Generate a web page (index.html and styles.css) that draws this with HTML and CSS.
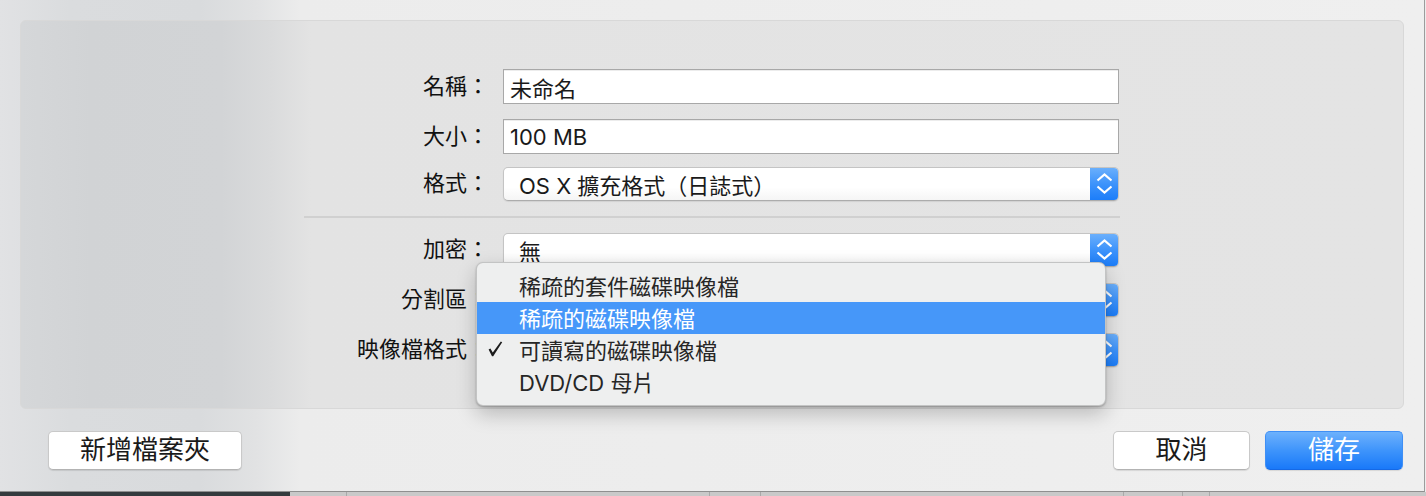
FILE: index.html
```html
<!DOCTYPE html>
<html lang="zh-Hant">
<head>
<meta charset="utf-8">
<title>新增映像檔</title>
<link rel="stylesheet" href="styles.css">
</head>
<body>
<div class="screen">
  <div class="sheet">
    <div class="panel">
      <div class="form">
        <div class="row r1">
          <div class="label">名稱：</div>
          <div class="field text">未命名</div>
        </div>
        <div class="row r2">
          <div class="label">大小：</div>
          <div class="field text">100 MB</div>
        </div>
        <div class="row r3">
          <div class="label">格式：</div>
          <div class="field popup"><span class="ptext">OS X 擴充格式（日誌式）</span><span class="stepper"><svg width="29" height="34" viewBox="0 0 29 34"><path d="M7.5 13.5 L14.5 7.5 L21.5 13.5 M7.5 19.5 L14.5 25.5 L21.5 19.5" fill="none" stroke="#fff" stroke-width="2.2"/></svg></span></div>
        </div>
        <div class="divider"></div>
        <div class="row r4">
          <div class="label">加密：</div>
          <div class="field popup"><span class="ptext">無</span><span class="stepper"><svg width="29" height="34" viewBox="0 0 29 34"><path d="M7.5 13.5 L14.5 7.5 L21.5 13.5 M7.5 19.5 L14.5 25.5 L21.5 19.5" fill="none" stroke="#fff" stroke-width="2.2"/></svg></span></div>
        </div>
        <div class="row r5">
          <div class="label">分割區：</div>
          <div class="field popup"><span class="ptext"></span><span class="stepper"><svg width="29" height="34" viewBox="0 0 29 34"><path d="M7.5 13.5 L14.5 7.5 L21.5 13.5 M7.5 19.5 L14.5 25.5 L21.5 19.5" fill="none" stroke="#fff" stroke-width="2.2"/></svg></span></div>
        </div>
        <div class="row r6">
          <div class="label">映像檔格式：</div>
          <div class="field popup"><span class="ptext"></span><span class="stepper"><svg width="29" height="34" viewBox="0 0 29 34"><path d="M7.5 13.5 L14.5 7.5 L21.5 13.5 M7.5 19.5 L14.5 25.5 L21.5 19.5" fill="none" stroke="#fff" stroke-width="2.2"/></svg></span></div>
        </div>
      </div>
    </div>
    <div class="actions">
      <button class="btn btn-folder">新增檔案夾</button>
      <div class="right-group">
        <button class="btn btn-cancel">取消</button>
        <button class="btn btn-primary">儲存</button>
      </div>
    </div>
    <div class="menu">
      <div class="item">稀疏的套件磁碟映像檔</div>
      <div class="item selected">稀疏的磁碟映像檔</div>
      <div class="item checked"><svg class="check" width="15" height="16" viewBox="0 0 15 16"><path d="M0.6 8.6 L2.4 7.6 L4.8 11.4 L12.8 0.6 L14.2 1.3 L5.2 15.2 L4 15.2 Z" fill="#1c1c1c"/></svg>可讀寫的磁碟映像檔</div>
      <div class="item">DVD/CD 母片</div>
    </div>
  </div>
  <div class="dock">
    <div class="seg dark"></div>
    <div class="seg s1"></div>
    <div class="seg s2"></div>
    <div class="seg s3"></div>
    <div class="seg s4"></div>
    <div class="seg s5"></div>
    <div class="seg s6"></div>
    <div class="seg s7"></div>
  </div>
</div>
</body>
</html>
```

FILE: styles.css
```css
* { box-sizing: border-box; }
html, body {
  margin: 0;
  padding: 0;
}
body {
  background: #ededed;
  font-family: "Inter", "Noto Sans CJK TC", "Noto Sans CJK SC", sans-serif;
  font-size: 22px;
  color: #111;
  width: 1426px;
  height: 496px;
  overflow: hidden;
}
.screen {
  width: 1426px;
  height: 496px;
  display: flex;
  flex-direction: column;
}
.sheet {
  position: relative;
  width: 1425px;
  height: 492px;
  border-right: 1px solid #9c9c9c;
  border-bottom: 1px solid #8f8f8f;
  background: linear-gradient(90deg, #e1e2e4 0px, #dadcde 70px, #d9dbdd 200px, #e1e2e3 255px, #ececec 300px, #efefef 100%);
  padding: 20px 20px 0 20px;
}
.panel {
  width: 1384px;
  height: 389px;
  border: 1px solid #d8d8d8;
  border-radius: 6px;
  background: linear-gradient(90deg, #d5d7d9 0px, #d1d3d5 70px, #d2d4d6 200px, #dadbdc 250px, #e3e3e3 290px, #e4e4e4 100%);
  padding-top: 48px;
}
.form {
  display: flex;
  flex-direction: column;
}
.row {
  display: grid;
  grid-template-columns: 468px 616px;
  column-gap: 14px;
  align-items: center;
}
.r2 { margin-top: 15px; }
.r3 { margin-top: 13px; }
.r4 { margin-top: 15px; }
.r5 { margin-top: 16px; }
.r6 { margin-top: 16px; }
.divider {
  margin: 15px 0 0 283px;
  width: 816px;
  height: 2px;
  background: #d0d0d0;
}
.label {
  text-align: right;
  color: #111;
  white-space: nowrap;
  line-height: 34px;
  margin-top: -2px;
}
.field {
  height: 34px;
  background: #fff;
  display: flex;
  align-items: center;
  white-space: nowrap;
  overflow: hidden;
}
.text {
  height: 35px;
  border: 1px solid #a8a8a8;
  box-shadow: inset 0 1px 0 #ececec;
  padding-left: 6px;
  color: #1a1a1a;
}
.popup {
  position: relative;
  border: 1px solid #c4c4c4;
  border-bottom-color: #acacac;
  border-radius: 5px;
  background: linear-gradient(#ffffff, #ffffff 60%, #f5f5f5);
  box-shadow: 0 1px 1px rgba(0,0,0,0.08);
  padding-left: 15px;
  color: #1a1a1a;
}
.ptext {
  flex: 1;
}
.stepper {
  position: absolute;
  right: -1px;
  top: -1px;
  width: 29px;
  height: 34px;
  border-radius: 0 5px 5px 0;
  background: linear-gradient(#6db1fc, #3d93fb 50%, #1a7cf9);
  display: flex;
}
.actions {
  margin-top: 22px;
  margin-left: -20px;
  margin-right: -20px;
  padding: 0 21px 0 48px;
  display: flex;
  justify-content: space-between;
  align-items: center;
}
.right-group {
  display: flex;
  gap: 15px;
}
.btn {
  font-family: "Inter", "Noto Sans CJK TC", sans-serif;
  font-size: 26px;
  height: 39px;
  border-radius: 5px;
  background: #fff;
  border: 1px solid #c9c9c9;
  border-bottom-color: #b3b3b3;
  box-shadow: 0 1px 1px rgba(0,0,0,0.1);
  color: #1a1a1a;
  padding: 0 0 2px 0;
  display: flex;
  align-items: center;
  justify-content: center;
  line-height: 1;
}
.btn-folder { width: 194px; }
.btn-cancel { width: 137px; }
.btn-primary {
  width: 138px;
  color: #fff;
  border: 1px solid #3f8ff5;
  border-bottom-color: #1569e6;
  background: linear-gradient(#6db1fc, #3e94fb 50%, #1979f9);
}
.menu {
  position: absolute;
  left: 476px;
  top: 262px;
  width: 630px;
  height: 144px;
  border-radius: 7px;
  background: #eeefef;
  border: 1px solid rgba(0,0,0,0.18);
  box-shadow: 0 8px 20px rgba(0,0,0,0.22), 0 1px 2px rgba(0,0,0,0.25);
  padding: 7px 0;
  color: #262626;
}
.item {
  position: relative;
  height: 32px;
  padding-left: 42px;
  padding-bottom: 3px;
  display: flex;
  align-items: center;
  white-space: nowrap;
}
.item.selected {
  background: #4697f9;
  color: #fff;
}
.check {
  position: absolute;
  left: 11px;
  top: 7px;
}
.dock {
  display: flex;
  height: 4px;
  background: #c9c9c9;
}
.seg {
  height: 4px;
  border-right: 1px solid #a9a9a9;
}
.seg.dark { width: 290px; background: #343b3e; border-right: none; }
.s1 { width: 57px; }
.s2 { width: 363px; }
.s3 { width: 51px; }
.s4 { width: 363px; }
.s5 { width: 59px; }
.s6 { width: 27px; }
.s7 { flex: 1; border-right: none; }
```
